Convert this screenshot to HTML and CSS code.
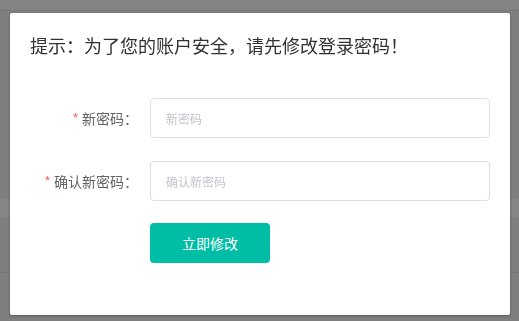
FILE: index.html
```html
<!DOCTYPE html>
<html lang="zh-CN">

<head>
    <meta charset="UTF-8">
    <meta name="viewport" content="width=device-width, initial-scale=1.0">
    <title>修改密码</title>
    <link rel="stylesheet" href="styles.css">
</head>

<body>
    <div class="page">
        <div class="topbar"></div>
        <div class="band"></div>
        <div class="row-line"></div>
    </div>

    <div class="mask">
        <div class="dialog">
            <div class="dialog-header">提示：为了您的账户安全，请先修改登录密码！</div>
            <form class="dialog-body" action="">
                <div class="form-item">
                    <label class="form-label" for="pwd"><span class="star">*</span> 新密码：</label>
                    <input id="pwd" class="form-input" type="password" placeholder="新密码">
                </div>
                <div class="form-item">
                    <label class="form-label" for="pwd2"><span class="star">*</span> 确认新密码：</label>
                    <input id="pwd2" class="form-input" type="password" placeholder="确认新密码">
                </div>
                <div class="form-item">
                    <span class="form-label"></span>
                    <button class="btn" type="submit">立即修改</button>
                </div>
            </form>
        </div>
    </div>
</body>

</html>
```

FILE: styles.css
```css
* {
    box-sizing: border-box;
}

body {
    margin: 0;
    font-family: "Noto Sans CJK SC", "Noto Sans", sans-serif;
    background-color: #7f7f7f;
}

.page {
    height: 321px;
}

.topbar {
    height: 11px;
    background-color: #838383;
    border-bottom: 1px solid #777;
}

.band {
    margin-top: 188px;
    height: 18px;
    background-color: #858585;
}

.row-line {
    margin-top: 55px;
    height: 1px;
    background-color: #777;
}

.mask {
    position: fixed;
    top: 0;
    left: 0;
    right: 0;
    bottom: 0;
}

.dialog {
    position: absolute;
    top: 13px;
    left: 10px;
    width: 500px;
    height: 302px;
    background-color: #fff;
    border-radius: 2px;
    box-shadow: 0 1px 3px rgba(0, 0, 0, 0.3);
}

.dialog-header {
    padding: 20px 20px;
    line-height: 24px;
    font-size: 18px;
    color: #303133;
}

.dialog-body {
    padding: 21px 20px 0;
}

.form-item {
    display: flex;
    align-items: center;
    margin-bottom: 23px;
}

.form-item:nth-child(2) {
    margin-bottom: 22px;
}

.form-label {
    width: 120px;
    padding-right: 12px;
    text-align: right;
    font-size: 14px;
    color: #606266;
}

.star {
    color: #f56c6c;
}

.form-input {
    width: 340px;
    height: 40px;
    padding: 0 15px;
    border: 1px solid #dcdfe6;
    border-radius: 4px;
    font-family: inherit;
    font-size: 12px;
    color: #606266;
    outline: none;
}

.form-input::placeholder {
    color: #c0c4cc;
}

.btn {
    width: 120px;
    height: 40px;
    border: none;
    border-radius: 4px;
    background-color: #00bda5;
    color: #fff;
    font-family: inherit;
    font-size: 14px;
}
```
